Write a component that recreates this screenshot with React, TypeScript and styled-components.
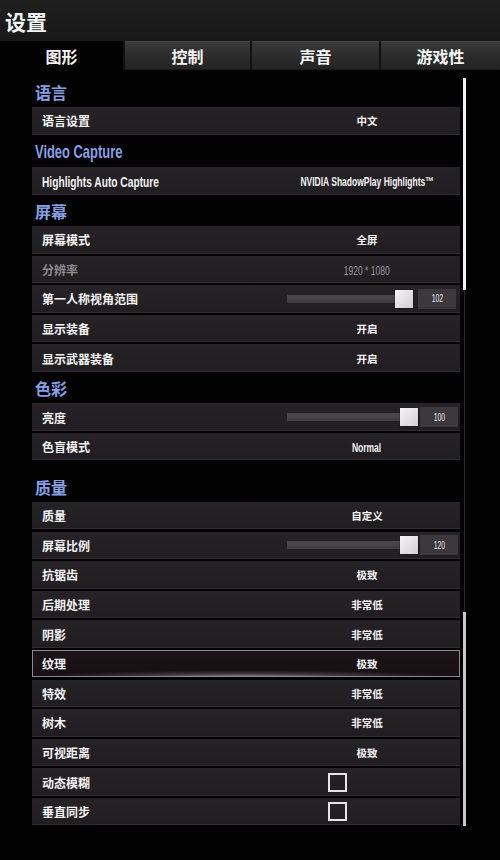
import React, { FC } from 'react'
import styled, { createGlobalStyle, css } from 'styled-components'

const GlobalStyle = createGlobalStyle`
  html, body {
    margin: 0;
    padding: 0;
    background: #020202;
  }
  body {
    width: 500px;
    height: 860px;
    overflow: hidden;
    font-family: "Noto Sans CJK SC", "Liberation Sans", sans-serif;
    color: #f2f2f2;
  }
`

// no condensed face is installed, so the game's narrow latin font is squeezed
const Narrow = styled.span<{ origin?: 'left' | 'center' }>`
  display: inline-block;
  white-space: nowrap;
  font-family: "Liberation Sans", "Noto Sans CJK SC", sans-serif;
  transform: scaleX(0.68);
  transform-origin: ${({ origin }) => (origin === 'left' ? 'left center' : 'center')};
`

const Page = styled.div`
  width: 500px;
  height: 860px;
  background: #020202;
  display: flex;
  flex-direction: column;
`

const TitleBar = styled.div`
  height: 41px;
  background: linear-gradient(#1f1f1f, #191919);
  display: flex;
  align-items: center;
  padding-left: 5px;
  font-size: 21px;
  font-weight: 700;
  color: #f4f4f4;
`

const TabBar = styled.div`
  height: 29px;
  display: grid;
  grid-template-columns: 123px 125px 127px 1fr;
  gap: 2px;
  background: #111;
`

const Tab = styled.div<{ active?: boolean }>`
  display: flex;
  align-items: center;
  justify-content: center;
  font-size: 16px;
  font-weight: 700;
  color: #f4f4f4;
  background: ${({ active }) =>
    active ? '#020202' : 'linear-gradient(#3a3a3a, #2a2a2a 60%, #232323)'};
  box-shadow: ${({ active }) =>
    active ? 'none' : 'inset 0 1px 0 #444, inset 0 -1px 0 #1a1a1a'};
`

const Content = styled.div`
  display: flex;
  padding: 8px 0 0 32px;
  gap: 2px;
`

const MainColumn = styled.div`
  width: 428px;
  display: flex;
  flex-direction: column;
`

const ScrollTrack = styled.div`
  width: 5px;
  display: flex;
  flex-direction: column;
  align-items: center;
`

const ScrollPart = styled.div<{ h: number; tone: 'white' | 'dim' | 'gray' }>`
  height: ${({ h }) => h}px;
  width: ${({ tone }) => (tone === 'dim' ? '1px' : '3px')};
  background: ${({ tone }) =>
    tone === 'white' ? '#f4f4f4' : tone === 'gray' ? '#c9c9cc' : '#2a2a2c'};
`

const Heading = styled.div<{ h: number; latin?: boolean }>`
  height: ${({ h }) => h}px;
  display: flex;
  align-items: flex-end;
  padding: 0 0 6px 3px;
  box-sizing: border-box;
  font-size: ${({ latin }) => (latin ? '19px' : '16px')};
  line-height: 18px;
  font-weight: 700;
  color: #87a0e4;
`

const RowList = styled.div`
  display: flex;
  flex-direction: column;
  gap: 2.1px;
`

const Row = styled.div<{ active?: boolean }>`
  height: 27.5px;
  box-sizing: border-box;
  display: flex;
  align-items: center;
  padding-left: 10px;
  background: linear-gradient(#262327, #211e21);
  box-shadow: inset 0 -1px 0 #302d31;
  ${({ active }) =>
    active &&
    css`
      background: radial-gradient(ellipse 60% 30% at 50% 100%, #8a8588 0%, #3a3336 45%, transparent 80%),
        linear-gradient(#1b1416, #171113);
      box-shadow: inset 0 0 0 1px #8b898b;
    `}
`

const Label = styled.div<{ dim?: boolean; latin?: boolean }>`
  flex: 1;
  min-width: 0;
  font-size: ${({ latin }) => (latin ? '15px' : '12px')};
  font-weight: 700;
  color: ${({ dim }) => (dim ? '#8d8b8e' : '#f2f2f2')};
`

const ValueCell = styled.div<{ align?: 'center' | 'start' }>`
  width: 186px;
  height: 100%;
  display: flex;
  align-items: center;
  justify-content: ${({ align }) => (align === 'start' ? 'flex-start' : 'center')};
  padding-left: ${({ align }) => (align === 'start' ? '13px' : '0')};
  box-sizing: border-box;
`

const ValueText = styled.span<{ dim?: boolean; latin?: boolean }>`
  font-size: ${({ latin }) => (latin ? '12.5px' : '10.5px')};
  font-weight: ${({ dim }) => (dim ? 400 : 700)};
  color: ${({ dim }) => (dim ? '#9a989b' : '#f2f2f2')};
  white-space: nowrap;
`

const SliderWrap = styled.div`
  display: flex;
  align-items: center;
`

const SliderTrack = styled.div<{ w: number }>`
  width: ${({ w }) => w}px;
  height: 8px;
  background: linear-gradient(#4c494d, #3f3c40);
`

const SliderThumb = styled.div`
  width: 18px;
  height: 18px;
  background: linear-gradient(135deg, #f4f4f4, #cfcfd1);
  box-shadow: 0 0 1px #000;
`

const SliderValue = styled.div<{ gap: number }>`
  width: 38px;
  height: 20px;
  margin-left: ${({ gap }) => gap}px;
  background: #3c393d;
  display: flex;
  align-items: center;
  justify-content: center;
  font-size: 10px;
  color: #e8e8e8;
`

const CheckBox = styled.div`
  width: 19px;
  height: 19px;
  margin-left: 41px;
  box-sizing: border-box;
  border: 2px solid #e6e6e6;
`

type Setting = {
  label: string
  value?: string
  latin?: boolean
  valueLatin?: boolean
  dim?: boolean
  slider?: { value: number; track: number; gap: number }
  check?: boolean
  active?: boolean
}

type Section = {
  title: string
  h: number
  latin?: boolean
  rows: Setting[]
}

const sections: Section[] = [
  { title: '语言', h: 29, rows: [{ label: '语言设置', value: '中文' }] },
  {
    title: 'Video Capture',
    h: 32.5,
    latin: true,
    rows: [
      {
        label: 'Highlights Auto Capture',
        latin: true,
        value: 'NVIDIA ShadowPlay Highlights™',
        valueLatin: true,
      },
    ],
  },
  {
    title: '屏幕',
    h: 31.5,
    rows: [
      { label: '屏幕模式', value: '全屏' },
      { label: '分辨率', value: '1920 * 1080', valueLatin: true, dim: true },
      { label: '第一人称视角范围', slider: { value: 102, track: 108, gap: 5 } },
      { label: '显示装备', value: '开启' },
      { label: '显示武器装备', value: '开启' },
    ],
  },
  {
    title: '色彩',
    h: 31.5,
    rows: [
      { label: '亮度', slider: { value: 100, track: 113, gap: 2 } },
      { label: '色盲模式', value: 'Normal', valueLatin: true },
    ],
  },
  {
    title: '质量',
    h: 41.5,
    rows: [
      { label: '质量', value: '自定义' },
      { label: '屏幕比例', slider: { value: 120, track: 113, gap: 2 } },
      { label: '抗锯齿', value: '极致' },
      { label: '后期处理', value: '非常低' },
      { label: '阴影', value: '非常低' },
      { label: '纹理', value: '极致', active: true },
      { label: '特效', value: '非常低' },
      { label: '树木', value: '非常低' },
      { label: '可视距离', value: '极致' },
      { label: '动态模糊', check: true },
      { label: '垂直同步', check: true },
    ],
  },
]

const tabs = ['图形', '控制', '声音', '游戏性']

const SettingRow: FC<{ item: Setting }> = ({ item }) => {
  const align = item.slider || item.check ? 'start' : 'center'
  return (
    <Row active={item.active}>
      <Label dim={item.dim} latin={item.latin}>
        {item.latin ? <Narrow origin="left">{item.label}</Narrow> : item.label}
      </Label>
      <ValueCell align={align}>
        {item.slider && (
          <SliderWrap>
            <SliderTrack w={item.slider.track} />
            <SliderThumb />
            <SliderValue gap={item.slider.gap}>
              <Narrow>{item.slider.value}</Narrow>
            </SliderValue>
          </SliderWrap>
        )}
        {item.check && <CheckBox />}
        {item.value && (
          <ValueText dim={item.dim} latin={item.valueLatin}>
            {item.valueLatin ? <Narrow>{item.value}</Narrow> : item.value}
          </ValueText>
        )}
      </ValueCell>
    </Row>
  )
}

const App: FC = () => {
  return (
    <Page>
      <GlobalStyle />
      <TitleBar>设置</TitleBar>
      <TabBar>
        {tabs.map((t, i) => (
          <Tab key={t} active={i === 0}>
            {t}
          </Tab>
        ))}
      </TabBar>
      <Content>
        <MainColumn>
          {sections.map((s) => (
            <React.Fragment key={s.title}>
              <Heading h={s.h} latin={s.latin}>
                {s.latin ? <Narrow origin="left">{s.title}</Narrow> : s.title}
              </Heading>
              <RowList>
                {s.rows.map((r) => (
                  <SettingRow key={r.label} item={r} />
                ))}
              </RowList>
            </React.Fragment>
          ))}
        </MainColumn>
        <ScrollTrack>
          <ScrollPart h={212} tone="white" />
          <ScrollPart h={322} tone="dim" />
          <ScrollPart h={214} tone="gray" />
        </ScrollTrack>
      </Content>
    </Page>
  )
}

export default App
